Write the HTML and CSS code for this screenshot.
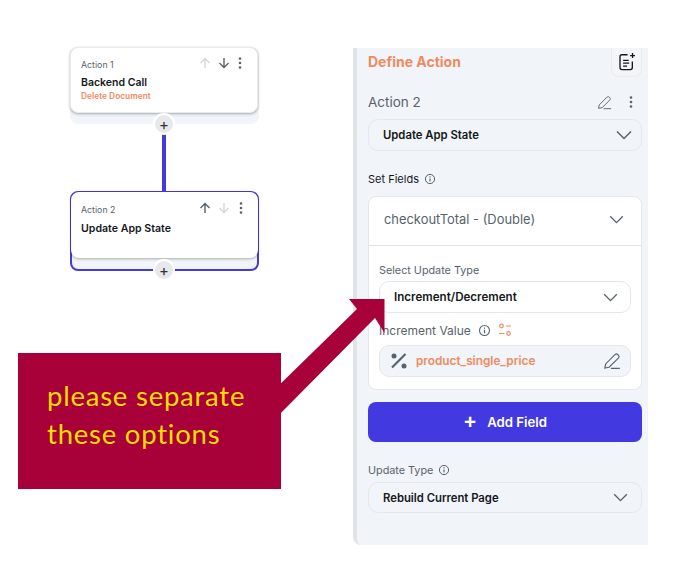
FILE: index.html
```html
<!DOCTYPE html>
<html lang="en">

<head>
    <meta charset="UTF-8">
    <meta name="viewport" content="width=device-width, initial-scale=1.0">
    <title>Define Action</title>
    <link rel="stylesheet" href="styles.css">
</head>

<body>
    <svg class="icon-defs" width="0" height="0">
        <symbol id="chevron" viewBox="0 0 16 10">
            <path d="M1 1.5 8 8.5 15 1.5" fill="none" stroke="currentColor" stroke-width="1.5" />
        </symbol>
        <symbol id="info" viewBox="0 0 12 12">
            <circle cx="6" cy="6" r="4.6" fill="none" stroke="currentColor" stroke-width="1" />
            <path d="M6 5.4V8.6M6 3.3V4.4" fill="none" stroke="currentColor" stroke-width="1.1" />
        </symbol>
        <symbol id="pencil" viewBox="0 0 16 16">
            <path d="M1.6 14.2 2.4 10.6 10.6 2.3C11.3 1.6 12.4 1.6 13.1 2.3L13.7 2.9C14.4 3.6 14.4 4.7 13.7 5.4L5.4 13.5ZM7 14.6H15" fill="none" stroke="currentColor" stroke-width="1" />
        </symbol>
        <symbol id="dots" viewBox="0 0 4 14">
            <circle cx="2" cy="2.5" r="1.3" fill="currentColor" />
            <circle cx="2" cy="7" r="1.3" fill="currentColor" />
            <circle cx="2" cy="11.5" r="1.3" fill="currentColor" />
        </symbol>
        <symbol id="arrow-up" viewBox="0 0 12 12">
            <path d="M6 11V1.5M1.5 6 6 1.5 10.500 6" fill="none" stroke="currentColor" stroke-width="1.4" />
        </symbol>
        <symbol id="arrow-down" viewBox="0 0 12 12">
            <path d="M6 1V10.500M1.5 6 6 10.500 10.500 6" fill="none" stroke="currentColor" stroke-width="1.4" />
        </symbol>
    </svg>

    <div class="page">
        <div class="flow">
            <div class="action">
                <div class="action-card">
                    <div class="action-top">
                        <span class="action-name">Action 1</span>
                        <svg class="tool tool-off"><use href="#arrow-up" /></svg>
                        <svg class="tool"><use href="#arrow-down" /></svg>
                        <svg class="tool-dots"><use href="#dots" /></svg>
                    </div>
                    <div class="action-title">Backend Call</div>
                    <div class="action-sub">Delete Document</div>
                </div>
                <span class="add-btn">+</span>
            </div>

            <div class="connector"></div>

            <div class="action action-active">
                <div class="action-card">
                    <div class="action-top">
                        <span class="action-name">Action 2</span>
                        <svg class="tool"><use href="#arrow-up" /></svg>
                        <svg class="tool tool-off"><use href="#arrow-down" /></svg>
                        <svg class="tool-dots"><use href="#dots" /></svg>
                    </div>
                    <div class="action-title">Update App State</div>
                </div>
                <span class="add-btn">+</span>
            </div>
        </div>

        <div class="panel">
            <div class="panel-head">
                <h2 class="panel-title">Define Action</h2>
                <div class="head-btn">
                    <svg width="20" height="20" viewBox="0 0 18 18" fill="none" stroke="#14181b" stroke-width="1.2">
                        <path d="M9.500 2.500H4.500C3.400 2.500 2.700 3.200 2.700 4.300V14C2.700 15.100 3.400 15.800 4.500 15.800H12C13.100 15.800 13.800 15.100 13.800 14V8.500" />
                        <path d="M5.500 7.500H10.500M5.500 10H11M5.500 12.700H9" />
                        <path d="M14 1V5.400M11.800 3.200H16.200" />
                    </svg>
                </div>
            </div>

            <div class="action-row">
                <span class="action-row-name">Action 2</span>
                <svg class="row-pencil"><use href="#pencil" /></svg>
                <svg class="row-dots"><use href="#dots" /></svg>
            </div>

            <div class="select">
                <span>Update App State</span>
                <svg class="chevron"><use href="#chevron" /></svg>
            </div>

            <div class="label label-dark">Set Fields <svg class="info"><use href="#info" /></svg></div>

            <div class="field-card">
                <div class="field-head">
                    <span>checkoutTotal - (Double)</span>
                    <svg class="chevron chevron-sm"><use href="#chevron" /></svg>
                </div>
                <div class="field-body">
                    <div class="label label-update">Select Update Type</div>
                    <div class="select select-plain">
                        <span>Increment/Decrement</span>
                        <svg class="chevron chevron-sm"><use href="#chevron" /></svg>
                    </div>
                    <div class="label label-value">
                        Increment Value
                        <svg class="info info-lg"><use href="#info" /></svg>
                        <svg class="swap" viewBox="0 0 14 14" fill="none" stroke="#ee8b60" stroke-width="1.2">
                            <circle cx="3.500" cy="3" r="1.800" />
                            <path d="M8 3H13M1 10.500H6.500" />
                            <circle cx="10.500" cy="10.500" r="1.800" />
                        </svg>
                    </div>
                    <div class="value-box">
                        <svg class="percent" viewBox="0 0 18 18">
                            <circle cx="4" cy="4" r="2.500" fill="#57636c" />
                            <circle cx="14" cy="14" r="2.500" fill="#57636c" />
                            <path d="M15.500 2 2 15.500" stroke="#57636c" stroke-width="2.200" />
                        </svg>
                        <span class="value-name">product_single_price</span>
                        <svg class="value-pencil"><use href="#pencil" /></svg>
                    </div>
                </div>
            </div>

            <div class="add-field"><span class="add-plus">+</span>Add Field</div>

            <div class="label label-type">Update Type <svg class="info"><use href="#info" /></svg></div>
            <div class="select select-last">
                <span>Rebuild Current Page</span>
                <svg class="chevron chevron-sm"><use href="#chevron" /></svg>
            </div>
        </div>
    </div>

    <!-- annotation drawn over the screenshot -->
    <svg class="callout-arrow" viewBox="0 0 677 578">
        <path d="M270 394 357 309 349 299 384.500 299 384.500 333 375 318 270 424Z" fill="#a80038" />
    </svg>
    <div class="callout">please separate<br>these options</div>
</body>

</html>
```

FILE: styles.css
```css
body {
    margin: 0;
    background: #fff;
    font-family: "Inter", "Liberation Sans", sans-serif;
    color: #14181b;
}

.icon-defs {
    position: absolute;
}

.page {
    display: flex;
    align-items: flex-start;
    width: 677px;
    height: 578px;
    padding: 47px 0 0 70px;
    box-sizing: border-box;
}

/* left: action flow */
.flow {
    display: flex;
    flex-direction: column;
    width: 189px;
    margin-right: 94px;
}

.action {
    position: relative;
    height: 77px;
    background: #f1f4f8;
    border-radius: 8px;
}

.action-card {
    height: 66px;
    box-sizing: border-box;
    padding: 9px 15px 9px 10px;
    margin-right: 1px;
    background: #fff;
    border: 1px solid #e8eaed;
    border-radius: 8px;
    box-shadow: 0 1px 3px rgba(0, 0, 0, 0.3);
}

.action-top {
    display: flex;
    align-items: center;
    height: 14px;
}

.action-name {
    flex: 1;
    font-size: 8.800px;
    color: #57636c;
}

.tool {
    width: 12px;
    height: 12px;
    margin: 0 0 2px 7px;
    color: #57636c;
}

.tool-off {
    color: #d5d8dc;
}

.tool-dots {
    width: 4px;
    height: 14px;
    margin: 0 0 2px 8px;
    color: #57636c;
}

.action-title {
    margin-top: 5px;
    font-size: 10.500px;
    font-weight: 600;
}

.action-sub {
    margin-top: 2px;
    font-size: 8.400px;
    font-weight: 600;
    color: #ee8b60;
}

.add-btn {
    position: absolute;
    left: 83px;
    bottom: -11px;
    width: 18px;
    height: 18px;
    border-radius: 50%;
    background: #e6e8eb;
    border: 2px solid #fff;
    display: flex;
    align-items: center;
    justify-content: center;
    font-size: 15px;
    line-height: 1;
    color: #333;
}

.connector {
    width: 4px;
    height: 57px;
    margin: 10px 0 0 92px;
    background: #4339e0;
}

.action-active {
    height: 80px;
    box-sizing: border-box;
    border: 2px solid #4339e0;
    background: #f1f4f8;
}

.action-active .action-card {
    border: none;
    height: 66px;
    margin: -1px -1px 0;
    padding: 10px 15px 10px 10px;
}

.action-active .action-title {
    margin-top: 6px;
    font-size: 10.600px;
}

.action-active .tool-dots {
    margin-left: 9px;
}

.action-active .add-btn {
    left: 81px;
    bottom: -12px;
}

/* right: define action panel */
.panel {
    width: 295px;
    height: 497px;
    margin-top: 1px;
    box-sizing: border-box;
    padding-left: 11px;
    padding-right: 6px;
    background: #f1f4f8;
    border-left: 4px solid #e0e3e7;
    border-bottom-left-radius: 8px;
}

.panel-head {
    display: flex;
    align-items: center;
    justify-content: space-between;
    height: 29px;
}

.panel-title {
    margin: 0;
    font-size: 14px;
    font-weight: 700;
    color: #ee8b60;
    position: relative;
    top: -1px;
}

.head-btn {
    display: flex;
    align-items: center;
    justify-content: center;
    width: 31px;
    height: 29px;
    box-sizing: border-box;
    border: 1px solid #e8ebef;
    border-top: none;
    border-radius: 0 0 8px 8px;
    background: #f3f5f9;
}

.action-row {
    display: flex;
    align-items: center;
    height: 24px;
    margin-top: 13px;
}

.action-row-name {
    flex: 1;
    font-size: 13.500px;
    color: #57636c;
}

.row-pencil {
    width: 15px;
    height: 15px;
    margin-right: 17px;
    color: #57636c;
}

.row-dots {
    width: 4px;
    height: 14px;
    margin-right: 9px;
    color: #57636c;
}

.select {
    display: flex;
    align-items: center;
    justify-content: space-between;
    height: 32px;
    box-sizing: border-box;
    margin-top: 5px;
    padding: 0 9px 0 14px;
    border: 1px solid #e4e7eb;
    border-radius: 10px;
    font-size: 11.300px;
    font-weight: 600;
}

.chevron {
    width: 16px;
    height: 10px;
    color: #57636c;
}

.chevron-sm {
    width: 15px;
    height: 9px;
}

.label {
    display: flex;
    align-items: center;
    font-size: 11px;
    color: #57636c;
}

.label-dark {
    height: 14px;
    margin-top: 21px;
    color: #14181b;
}

.info {
    width: 12px;
    height: 12px;
    margin-left: 5px;
    color: #57636c;
}

.field-card {
    height: 194px;
    box-sizing: border-box;
    margin-top: 10px;
    background: #fff;
    border: 1px solid #e4e7eb;
    border-radius: 8px;
}

.field-head {
    display: flex;
    align-items: center;
    justify-content: space-between;
    height: 49px;
    box-sizing: border-box;
    padding: 0 17px 4px 15px;
    border-bottom: 1px solid #e0e3e7;
    font-size: 12.900px;
    color: #57636c;
}

.field-body {
    padding: 0 10px;
}

.label-update {
    height: 14px;
    margin-top: 17px;
    font-size: 10.800px;
}

.select-plain {
    margin-top: 4px;
    padding-right: 12px;
    font-size: 11.600px;
}

.label-value {
    height: 16px;
    margin-top: 9px;
    font-size: 12px;
}

.info-lg {
    width: 13px;
    height: 13px;
    margin-left: 7px;
}

.swap {
    width: 14px;
    height: 14px;
    margin-left: 7px;
}

.value-box {
    display: flex;
    align-items: center;
    height: 32px;
    box-sizing: border-box;
    margin-top: 7px;
    padding: 0 9px 0 10px;
    background: #f1f4f8;
    border: 1px solid #e4e7eb;
    border-radius: 10px;
}

.percent {
    width: 18px;
    height: 18px;
}

.value-name {
    flex: 1;
    margin-left: 8px;
    font-size: 11.800px;
    font-weight: 600;
    color: #ee8b60;
}

.value-pencil {
    width: 18px;
    height: 18px;
    color: #57636c;
}

.add-field {
    display: flex;
    align-items: center;
    justify-content: center;
    height: 40px;
    margin-top: 12px;
    background: #4339e0;
    border-radius: 8px;
    color: #fff;
    font-size: 13.200px;
    font-weight: 600;
}

.add-plus {
    margin: 0 10px 4px 0;
    font-size: 21px;
    line-height: 1;
}

.label-type {
    height: 14px;
    margin-top: 21px;
    font-size: 10.800px;
}

.select-last {
    height: 31px;
    padding-right: 13px;
}

/* annotation */
.callout-arrow {
    position: absolute;
    left: 0;
    top: 0;
    width: 677px;
    height: 578px;
}

.callout {
    position: absolute;
    left: 18px;
    top: 353px;
    width: 263px;
    height: 136px;
    box-sizing: border-box;
    padding: 24px 0 0 29px;
    background: #a80038;
    color: #ffdd00;
    font-family: "Lato", sans-serif;
    font-size: 27.500px;
    letter-spacing: 0.770px;
    line-height: 38px;
}
```
